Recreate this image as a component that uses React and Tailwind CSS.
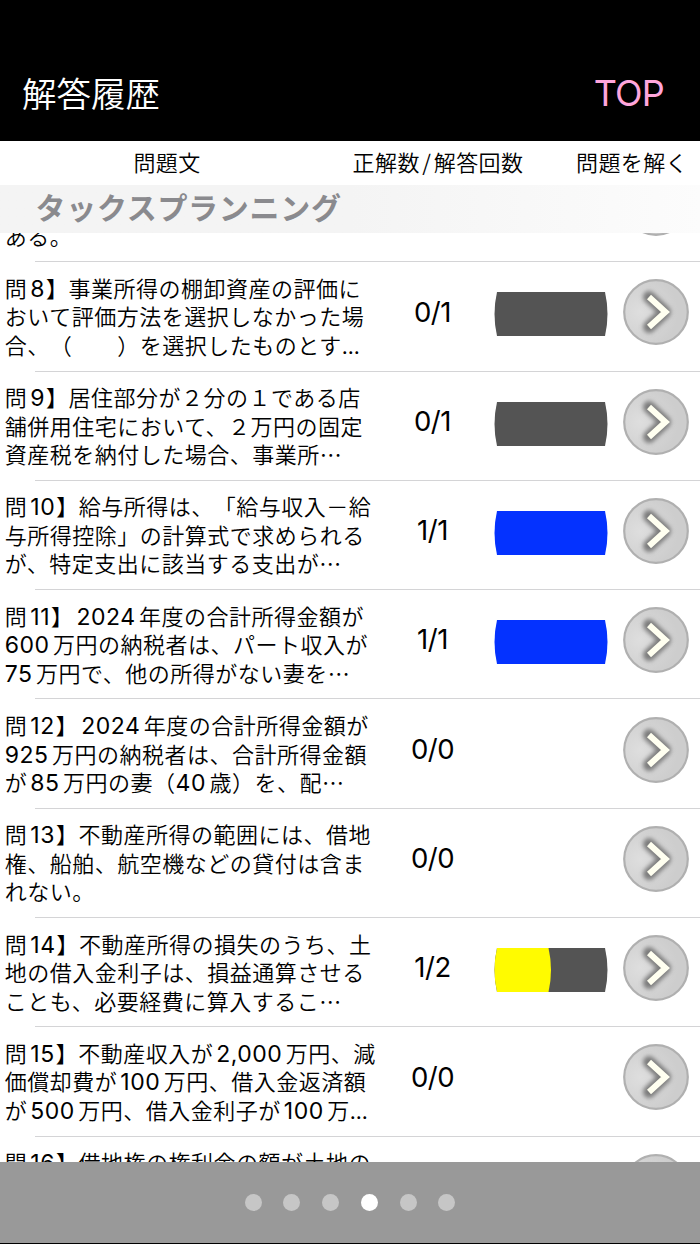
const rows = [
  { lines: ['ある。'], align: 'end' },
  { lines: ['問8】事業所得の棚卸資産の評価に', 'おいて評価方法を選択しなかった場', '合、（　　）を選択したものとす...'], correct: 0, total: 1 },
  { lines: ['問9】居住部分が２分の１である店', '舗併用住宅において、２万円の固定', '資産税を納付した場合、事業所…'], correct: 0, total: 1 },
  { lines: ['問10】給与所得は、「給与収入－給', '与所得控除」の計算式で求められる', 'が、特定支出に該当する支出が…'], correct: 1, total: 1 },
  { lines: ['問11】2024年度の合計所得金額が', '600万円の納税者は、パート収入が', '75万円で、他の所得がない妻を…'], correct: 1, total: 1 },
  { lines: ['問12】2024年度の合計所得金額が', '925万円の納税者は、合計所得金額', 'が85万円の妻（40歳）を、配…'], correct: 0, total: 0 },
  { lines: ['問13】不動産所得の範囲には、借地', '権、船舶、航空機などの貸付は含ま', 'れない。'], correct: 0, total: 0 },
  { lines: ['問14】不動産所得の損失のうち、土', '地の借入金利子は、損益通算させる', 'ことも、必要経費に算入するこ…'], correct: 1, total: 2 },
  { lines: ['問15】不動産収入が2,000万円、減', '価償却費が100万円、借入金返済額', 'が500万円、借入金利子が100万...'], correct: 0, total: 0 },
  { lines: ['問16】借地権の権利金の額が土地の'] },
]

const PAGES = 6
const ACTIVE_PAGE = 3

// Latin runs use Inter, with a little air where they touch a kanji or kana
function Line({ text }) {
  const parts = text.split(/([0-9,.]+)/)
  return (
    <p className="h-[28.5px] whitespace-nowrap">
      {parts.map((part, i) => {
        if (i % 2 === 0) return part
        const before = parts[i - 1]
        const after = parts[i + 1]
        const left = before && !before.endsWith('（') && part !== '...'
        const right = after && !after.startsWith('】')
        return (
          <span
            key={i}
            className={`font-['Inter'] font-normal ${
              part === '...' ? 'text-[21px] tracking-normal' : 'text-[23px] tracking-[0.5px]'
            } ${left ? 'ml-[3px]' : ''} ${right ? 'mr-[3.5px]' : 'mr-px'}`}
          >
            {part}
          </span>
        )
      })}
    </p>
  )
}

function Bar({ correct, total }) {
  if (!total) return null
  const full = correct === total
  return (
    <svg width="114" height="44" viewBox="0 0 114 44">
      <path d="M3 0H111Q116 22 111 44H3Q-2 22 3 0Z" fill={full ? '#0432ff' : '#545454'} />
      {correct > 0 && !full && (
        <path d="M3 0H54.500Q59.500 22 54.500 44H3Q-2 22 3 0Z" fill="#fffb00" />
      )}
    </svg>
  )
}

function ArrowButton() {
  return (
    <button className="shrink-0">
      <svg width="66" height="66" viewBox="0 0 66 66" className="block">
        <defs>
          <radialGradient id="disc" cx="0.25" cy="0.5" r="0.6">
            <stop offset="0" stopColor="#dedede" />
            <stop offset="1" stopColor="#cdcdcd" />
          </radialGradient>
          <filter id="glow" filterUnits="userSpaceOnUse" x="0" y="0" width="66" height="66">
            <feGaussianBlur stdDeviation="2.2" />
          </filter>
        </defs>
        <circle cx="33" cy="33" r="31.800" fill="url(#disc)" stroke="#b0b0b0" strokeWidth="2.200" />
        <path d="M26 18L42 33L26 48" fill="none" stroke="#7c7c7c" strokeWidth="12" strokeLinecap="round" strokeLinejoin="round" filter="url(#glow)" />
        <path d="M26 18L42.500 33L26 48" fill="none" stroke="#fffff0" strokeWidth="6" />
      </svg>
    </button>
  )
}

function Row({ lines, correct, total, align }) {
  return (
    <li className="h-[109.3px] shrink-0 flex flex-col">
      <div className="flex-1 flex items-center">
        <div
          className={`w-[390px] h-[85.5px] -mt-[1.5px] pl-[4.8px] flex flex-col text-[22px] leading-[28.5px] tracking-[0.5px] ${
            align === 'end' ? 'justify-end' : ''
          }`}
        >
          {lines.map((text, i) => (
            <Line key={i} text={text} />
          ))}
        </div>
        <p className="w-[85px] pb-[9.6px] text-center font-['Inter'] font-normal text-[27.5px] leading-8 tracking-[-0.5px]">
          {total !== undefined && `${correct}/${total}`}
        </p>
        <div className="w-[148px] pl-[19px] pb-[3.8px]">
          <Bar correct={correct} total={total} />
        </div>
        <div className="pb-[3px]">
          <ArrowButton />
        </div>
      </div>
      <div className="ml-[35px] h-px bg-[#d4d4d6]" />
    </li>
  )
}

export default function App() {
  return (
    <div
      lang="ja"
      className="w-[700px] h-[1244px] flex flex-col overflow-hidden bg-white text-black font-['Noto_Sans_CJK_JP',sans-serif] font-[350] [text-spacing-trim:space-all]"
    >
      <header className="h-[141px] shrink-0 pt-[45px] pl-[22px] pr-[36px] flex items-center justify-between bg-black">
        <h1 className="pb-px text-[34.5px] leading-none font-[350] text-white">解答履歴</h1>
        <button className="font-['Inter'] text-[36px] leading-none font-normal tracking-[-0.8px] text-[#ffa6dc]">TOP</button>
      </header>

      <div className="h-[44px] shrink-0 pb-[4px] flex items-center text-[22px] leading-none tracking-[0.4px] whitespace-nowrap">
        <span className="w-[334px] text-center">問題文</span>
        <span className="w-[208px] text-center">
          正解数<span className="mx-[2.5px]">/</span>解答回数
        </span>
        <span className="flex-1 pl-[34px]">問題を解く</span>
      </div>

      <h2 className="h-[48px] shrink-0 pl-[35.5px] pb-[6px] flex items-center bg-linear-to-r from-[#f4f4f4] from-50% to-[#fcfcfc] text-[30px] leading-none font-bold tracking-[0.7px] text-[#8a8a8e]">
        タックスプランニング
      </h2>

      <main className="flex-1 min-h-0 overflow-hidden">
        <ul className="-mt-[80.1px] flex flex-col">
          {rows.map((row, i) => (
            <Row key={i} {...row} />
          ))}
        </ul>
      </main>

      <footer className="h-[82px] shrink-0 flex items-center justify-center gap-[21.7px] bg-[#999] border-b border-black">
        {Array.from({ length: PAGES }, (_, i) => (
          <span
            key={i}
            className={`size-[17px] rounded-full ${i === ACTIVE_PAGE ? 'bg-white' : 'bg-[#c6c6c6]'}`}
          />
        ))}
      </footer>
    </div>
  )
}
